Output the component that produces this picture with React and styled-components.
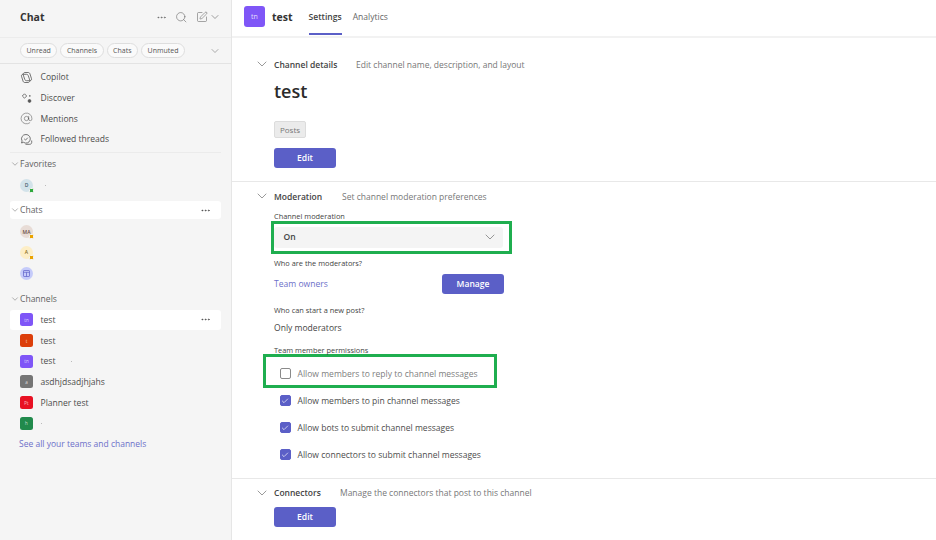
import React from "react";
import styled, { createGlobalStyle } from "styled-components";
import { Search, SquarePen, ChevronDown, Ellipsis, AtSign, Check } from "lucide-react";

const Global = createGlobalStyle`
  html, body { margin: 0; padding: 0; background: #fff; }
  body { font-family: "Open Sans", "Noto Sans", "Liberation Sans", sans-serif; color: #424242; overflow: hidden; }
  * { box-sizing: border-box; }
`;

const Page = styled.div`display: flex; width: 936px; height: 540px; overflow: hidden;`;
const Sidebar = styled.aside`width: 232px; flex: none; background: #f5f5f5; border-right: 1px solid #e6e6e6;`;
const SideHeader = styled.div`height: 37px; display: flex; align-items: center; padding: 0 10px 3px 20px; color: #555;`;
const SideTitle = styled.h1`margin: 0 auto 0 0; font-size: 10.5px; font-weight: 700; color: #333;`;
const HeaderIcons = styled.div`display: flex; align-items: center;`;
const IconSlot = styled.span`display: flex; margin-left: ${p => p.$ml || 0}px; color: ${p => p.$color || "#616161"};`;
const FilterBar = styled.div`height: 27px; display: flex; align-items: center; gap: 3px; padding: 0 10px 0 20px; border-top: 1px solid #ececec; border-bottom: 1px solid #e3e3e3;`;
const Pill = styled.span`height: 15px; padding: 0 5.5px; display: flex; align-items: center; border: 1px solid #dedede; border-radius: 8px; background: #fafafa; font-size: 7px; color: #555;`;
const FilterChevron = styled.span`margin-left: auto; display: flex; color: #777;`;
const NavList = styled.div`padding: 3px 0 2px;`;
const ChatList = styled.div`padding-top: 2px;`;
const Row = styled.div`height: ${p => p.$h || 20.7}px; margin: 0 10px; padding: 0 10px; display: flex; align-items: center; gap: 7.5px; font-size: 8.55px; color: #4d4d4d; border-radius: 3px; background: ${p => p.$active ? "#fff" : "transparent"};`;
const NavIcon = styled.span`width: 13px; height: 13px; display: flex; align-items: center; justify-content: center; color: #555; flex: none;`;
const SideDivider = styled.div`height: 1px; margin: 0 10px; background: #ebebeb;`;
const Heading = styled.div`height: ${p => p.$h || 22}px; margin: ${p => p.$mt || 0}px 10px 0; padding: 0 10px 0 0; display: flex; align-items: center; font-size: 8.55px; color: #616161; border-radius: 3px; background: ${p => p.$active ? "#fff" : "transparent"};`;
const Trailing = styled.span`margin-left: auto; display: flex; color: #444;`;
const Speck = styled.span`width: 1px; height: 1px; margin-left: ${p => p.$ml || 0}px; background: #bbb;`;
const Avatar = styled.span`position: relative; width: 13px; height: 13px; flex: none; border-radius: 50%; background: ${p => p.$bg}; color: ${p => p.$fg}; font-size: 5px; font-weight: 600; display: flex; align-items: center; justify-content: center;`;
const Presence = styled.span`position: absolute; right: -1px; bottom: -1px; width: 5px; height: 5px; border-radius: 1.5px; background: ${p => p.$c}; border: .5px solid #f5f5f5;`;
const TeamTile = styled.span`width: 13px; height: 13px; flex: none; border-radius: 2.5px; background: ${p => p.$bg}; color: rgba(255,255,255,.75); font-size: 4.5px; display: flex; align-items: center; justify-content: center;`;
const SeeAll = styled.a`display: flex; align-items: center; height: 20px; margin: -0.5px 0 0 19px; font-size: 8.5px; color: #6d70c9;`;

const Main = styled.main`flex: 1; min-width: 0; display: flex; flex-direction: column;`;
const TopBar = styled.header`height: 38px; flex: none; display: flex; align-items: center; padding: 0 0 3px 12px; border-bottom: 2px solid #f2f2f2;`;
const BigTile = styled.span`width: 21px; height: 21px; border-radius: 3px; background: #7f56f7; color: rgba(255,255,255,.8); font-size: 7px; display: flex; align-items: center; justify-content: center;`;
const TeamName = styled.span`margin: 0 16px 0 7px; font-size: 10.5px; font-weight: 700; color: #333;`;
const Tab = styled.span`position: relative; margin-right: 11px; font-size: 8.55px; font-weight: ${p => p.$on ? 600 : 400}; color: ${p => p.$on ? "#444" : "#666"};
  ${p => p.$on && `&::after { content: ""; position: absolute; left: 0; right: 0; bottom: -12px; height: 2px; background: #5b5fc7; }`}`;
const Content = styled.div`padding-left: 42px;`;
const SectionHead = styled.div`position: relative; height: 20px; margin-top: ${p => p.$mt}px; display: flex; align-items: center; font-size: 8.5px;`;
const SectionChevron = styled.span`position: absolute; left: -20px; top: 2px; display: flex; color: #666;`;
const SectionTitle = styled.span`font-weight: 600; color: #444; width: ${p => p.$w}px;`;
const SectionDesc = styled.span`color: #777;`;
const Divider = styled.div`height: 1px; margin: ${p => p.$mt}px 0 0 -42px; background: #e8e8e8;`;
const ChannelName = styled.h2`margin: 1px 0 0; height: 31px; display: flex; align-items: center; font-size: 18px; font-weight: 600; color: #2b2b2b;`;
const Chip = styled.span`width: 32px; height: 17px; margin-top: 15px; display: flex; align-items: center; justify-content: center; border-radius: 2px; border: 1px solid #dcdcdc; background: #ebebeb; color: #777; font-size: 8px;`;
const Button = styled.button`width: 62px; height: 20px; margin-top: ${p => p.$mt || 0}px; padding: 0; border: 0; border-radius: 3px; background: #5b5fc7; color: #fff; font: 600 8.55px "Open Sans", sans-serif; display: block; flex: none;`;
const Label = styled.div`height: 12px; margin-top: ${p => p.$mt || 0}px; display: flex; align-items: center; font-size: 7.4px; color: #444;`;
const GreenBox = styled.div`display: flex; flex-direction: column; justify-content: center; width: ${p => p.$w}px; height: ${p => p.$h}px; margin: ${p => p.$m}; padding: ${p => p.$p}; border: 3px solid #1fae4f;`;
const Select = styled.div`height: 21px; width: 229px; padding: 0 5.5px 0 9.5px; display: flex; align-items: center; justify-content: space-between; background: #f4f4f4; border-radius: 3px; font-size: 8.55px; font-weight: 600; color: #444;`;
const ModRow = styled.div`width: 230px; height: 20px; margin-top: 5.5px; display: flex; align-items: center; justify-content: space-between;`;
const LinkText = styled.span`font-size: 8.55px; color: #6d70c9;`;
const PlainText = styled.div`height: 16px; margin-top: 4px; display: flex; align-items: center; font-size: 8.55px; color: #444;`;
const CheckList = styled.div`margin-top: -0.8px;`;
const CheckRow = styled.div`height: ${p => p.$h || 27}px; display: flex; align-items: center; gap: 7px; margin-left: ${p => p.$ml ?? 5.5}px; font-size: 8.55px; color: ${p => p.$muted ? "#808080" : "#4d4d4d"};`;
const Box = styled.span`width: 11px; height: 11px; flex: none; border-radius: 2px; display: flex; align-items: center; justify-content: center; color: #fff; background: ${p => p.$on ? "#5b5fc7" : "#fff"}; border: 1px solid ${p => p.$on ? "#5b5fc7" : "#8a8a8a"};`;

const Copilot = () => (
  <svg width="13" height="13" viewBox="0 0 13 13" fill="none" stroke="#555" strokeWidth=".8">
    <path d="M5 1.5h3.2c1 0 1.5.6 1.8 1.5l1.5 4.7c.3 1-.3 2-1.5 2H8" />
    <path d="M8 11.5H4.8c-1 0-1.5-.6-1.8-1.5L1.5 5.3c-.3-1 .3-2 1.5-2H5" />
    <path d="M5 1.5C3.8 1.5 3.3 2.400 3 3.300L4.800 8.500c.3.800.9 1.200 1.700 1.200H8" />
    <path d="M8 11.500c1.200 0 1.700-.9 2-1.800L8.200 4.500C7.900 3.700 7.300 3.300 6.500 3.300H5" />
  </svg>
);
const Discover = () => (
  <svg width="13" height="13" viewBox="0 0 13 13" fill="none" stroke="#555" strokeWidth=".8">
    <path d="M4.500 1.800 6.700 4 4.500 6.200 2.300 4z" />
    <path d="M9.800 3.200v1.400M9.100 3.900h1.400" />
    <circle cx="9.500" cy="9" r="1.400" fill="#555" />
  </svg>
);
const Threads = () => (
  <svg width="13" height="13" viewBox="0 0 13 13" fill="none" stroke="#555" strokeWidth=".8">
    <path d="M6 1.500a4.300 4.300 0 1 1-2.500 7.800L1.500 10l.6-2A4.300 4.300 0 0 1 6 1.500z" />
    <path d="m4.200 5.800 1.300 1.300 2.300-2.400" />
    <path d="M5.500 11.300h4.200c1.200 0 2-.8 2-1.800V7.500" />
  </svg>
);
const Calendar = () => (
  <svg width="7" height="7" viewBox="0 0 7 7" fill="none" stroke="#5b5fc7" strokeWidth=".7">
    <rect x=".5" y=".5" width="6" height="6" rx=".6" />
    <path d="M.5 2.300h6M3.500 2.300v4.200" />
  </svg>
);

const Chev = ({ s = 10, c }) => <ChevronDown size={s} strokeWidth={s > 12 ? 1 : 1.2} color={c} />;

const channels = [
  { name: "test", bg: "#7f56f7", init: "tn", active: true },
  { name: "test", bg: "#dc3e0a", init: "t" },
  { name: "test", bg: "#7f56f7", init: "tn", speck: 8 },
  { name: "asdhjdsadjhjahs", bg: "#757575", init: "a" },
  { name: "Planner test", bg: "#e81123", init: "Pt" },
  { name: "", bg: "#218a4c", init: "h", speck: 0 },
];
const perms = [
  "Allow members to pin channel messages",
  "Allow bots to submit channel messages",
  "Allow connectors to submit channel messages",
];

export default function App() {
  return (
    <Page>
      <Global />
      <Sidebar>
        <SideHeader>
          <SideTitle>Chat</SideTitle>
          <HeaderIcons>
            <IconSlot><Ellipsis size={11} strokeWidth={1.5} /></IconSlot>
            <IconSlot $ml={8.25}><Search size={12.5} strokeWidth={1.1} /></IconSlot>
            <IconSlot $ml={8.75}><SquarePen size={12} strokeWidth={1.1} /></IconSlot>
            <IconSlot $ml={1}><Chev s={12} /></IconSlot>
          </HeaderIcons>
        </SideHeader>
        <FilterBar>
          <Pill>Unread</Pill><Pill>Channels</Pill><Pill>Chats</Pill><Pill>Unmuted</Pill>
          <FilterChevron><Chev s={12} /></FilterChevron>
        </FilterBar>
        <NavList>
          <Row><NavIcon><Copilot /></NavIcon>Copilot</Row>
          <Row><NavIcon><Discover /></NavIcon>Discover</Row>
          <Row><NavIcon><AtSign size={13} strokeWidth={1} /></NavIcon>Mentions</Row>
          <Row><NavIcon><Threads /></NavIcon>Followed threads</Row>
        </NavList>
        <SideDivider />
        <Heading><Chev c="#666" />Favorites</Heading>
        <Row><Avatar $bg="#d3e3ea" $fg="#44606e">D<Presence $c="#2fa83c" /></Avatar><Speck $ml={4} /></Row>
        <Heading $h={18} $mt={6} $active><Chev c="#666" />Chats<Trailing><Ellipsis size={11} strokeWidth={1.6} /></Trailing></Heading>
        <ChatList>
          <Row><Avatar $bg="#e8dcd6" $fg="#6b4f44">MA<Presence $c="#eaa300" /></Avatar></Row>
          <Row><Avatar $bg="#fdeec6" $fg="#8a6d1e">A<Presence $c="#eaa300" /></Avatar></Row>
          <Row><Avatar $bg="#c5cbfa"><Calendar /></Avatar></Row>
        </ChatList>
        <Heading $mt={4}><Chev c="#666" />Channels</Heading>
        {channels.map((c, i) => (
          <Row key={i} $active={c.active}>
            <TeamTile $bg={c.bg}>{c.init}</TeamTile>
            {c.name}
            {c.speck !== undefined && <Speck $ml={c.speck} />}
            {c.active && <Trailing><Ellipsis size={11} strokeWidth={1.6} /></Trailing>}
          </Row>
        ))}
        <SeeAll>See all your teams and channels</SeeAll>
      </Sidebar>
      <Main>
        <TopBar>
          <BigTile>tn</BigTile>
          <TeamName>test</TeamName>
          <Tab $on>Settings</Tab>
          <Tab>Analytics</Tab>
        </TopBar>
        <Content>
          <SectionHead $mt={16}>
            <SectionChevron><Chev s={16} /></SectionChevron>
            <SectionTitle $w={82}>Channel details</SectionTitle>
            <SectionDesc>Edit channel name, description, and layout</SectionDesc>
          </SectionHead>
          <ChannelName>test</ChannelName>
          <Chip>Posts</Chip>
          <Button $mt={10}>Edit</Button>
          <Divider $mt={13} />
          <SectionHead $mt={4}>
            <SectionChevron><Chev s={16} /></SectionChevron>
            <SectionTitle $w={68}>Moderation</SectionTitle>
            <SectionDesc>Set channel moderation preferences</SectionDesc>
          </SectionHead>
          <Label $mt={4}>Channel moderation</Label>
          <GreenBox $w={241} $h={32.5} $m="-1px 0 0 -3.3px" $p="0 0 0 .3px">
            <Select>On<Chev s={16} c="#666" /></Select>
          </GreenBox>
          <Label $mt={3}>Who are the moderators?</Label>
          <ModRow>
            <LinkText>Team owners</LinkText>
            <Button>Manage</Button>
          </ModRow>
          <Label $mt={9.5}>Who can start a new post?</Label>
          <PlainText>Only moderators</PlainText>
          <Label $mt={8.3}>Team member permissions</Label>
          <GreenBox $w={234} $h={34} $m="-1.7px 0 0 -10.7px" $p="5px 0 0 13.2px">
            <CheckRow $h={20} $ml={0} $muted><Box />Allow members to reply to channel messages</CheckRow>
          </GreenBox>
          <CheckList>
            {perms.map(p => (
              <CheckRow key={p}><Box $on><Check size={8} strokeWidth={2} /></Box>{p}</CheckRow>
            ))}
          </CheckList>
          <Divider $mt={10} />
          <SectionHead $mt={3.5}>
            <SectionChevron><Chev s={16} /></SectionChevron>
            <SectionTitle $w={66}>Connectors</SectionTitle>
            <SectionDesc>Manage the connectors that post to this channel</SectionDesc>
          </SectionHead>
          <Button $mt={4}>Edit</Button>
        </Content>
      </Main>
    </Page>
  );
}
